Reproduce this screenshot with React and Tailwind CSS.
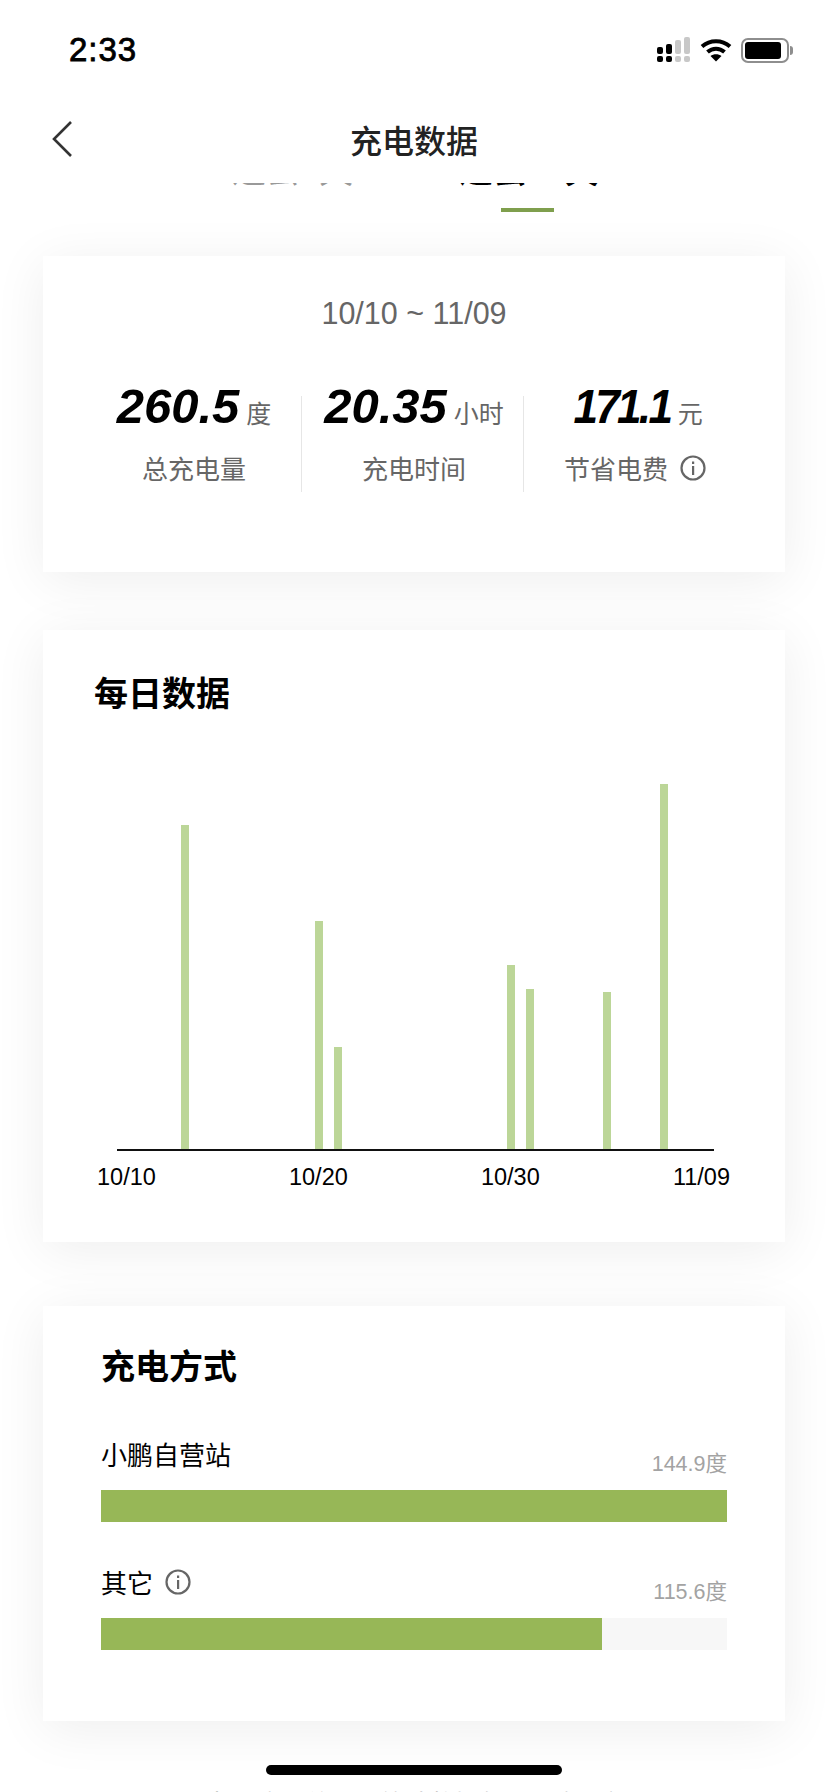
import React from "react";

const sans = "font-['Liberation_Sans','Noto_Sans_CJK_SC',sans-serif]";
const cardShadow = "shadow-[0_8px_50px_rgba(0,0,0,0.07)]";

const bars = [
    { x: 64, h: 324 },
    { x: 198, h: 228 },
    { x: 217, h: 102 },
    { x: 390, h: 184 },
    { x: 409, h: 160 },
    { x: 486, h: 157 },
    { x: 543, h: 365 },
];

const InfoIcon = ({ size = 26 }) => (
    <svg width={size} height={size} viewBox="0 0 26 26" fill="none" className="shrink-0 -translate-y-[2px]">
        <circle cx="13" cy="13" r="11.5" stroke="#666" strokeWidth="2.2" />
        <rect x="12" y="11" width="2.2" height="9" fill="#666" />
        <rect x="12" y="6.5" width="2.2" height="2.5" fill="#666" />
    </svg>
);

const StatusIcons = () => (
    <div className="flex items-center gap-[8px]">
        <svg width="36" height="26" viewBox="0 0 36 26">
            <rect x="1" y="10" width="6" height="7" rx="2" fill="#000" />
            <rect x="1" y="19" width="6" height="6" rx="2" fill="#000" />
            <rect x="10" y="7" width="6" height="10" rx="2" fill="#000" />
            <rect x="10" y="19" width="6" height="6" rx="2" fill="#000" />
            <rect x="19" y="3" width="6" height="14" rx="2" fill="#c8c8c8" />
            <rect x="19" y="19" width="6" height="6" rx="2" fill="#c8c8c8" />
            <rect x="28" y="0" width="6" height="17" rx="2" fill="#c8c8c8" />
            <rect x="28" y="19" width="6" height="6" rx="2" fill="#c8c8c8" />
        </svg>
        <svg width="32" height="24" viewBox="0 0 32 24" fill="none">
            <path d="M2 8.5C10 1.5 22 1.5 30 8.5" stroke="#000" strokeWidth="4" />
            <path d="M7.5 14C12.5 9.5 19.5 9.5 24.5 14" stroke="#000" strokeWidth="4" />
            <path d="M16 23.5L10.5 18C13.5 15.5 18.5 15.5 21.5 18Z" fill="#000" />
        </svg>
        <div className="flex items-center ml-[1px]">
            <div className="w-[48px] h-[25px] rounded-[7px] border-2 border-[#8e8e8e] p-[2px]">
                <div className="w-[36px] h-full rounded-[3px] bg-black" />
            </div>
            <div className="w-[3px] h-[9px] ml-[1px] rounded-r-full bg-[#8e8e8e]" />
        </div>
    </div>
);

const Stat = ({ value, unit, label, info, last, className, valueClass }) => (
    <div className={`flex flex-col items-center h-[96px] ${className} ${last ? "" : "border-r border-[#e6e6e6]"}`}>
        <div className="flex items-baseline gap-[7px] h-[50px] -mt-[15px]">
            <span className={`text-[49px] leading-[50px] font-bold italic text-black ${valueClass || ""}`}>{value}</span>
            <span className="text-[25px] leading-[30px] text-[#666]">{unit}</span>
        </div>
        <div className="flex items-center gap-[12px] mt-[21px] h-[36px] text-[26px] text-[#666]">
            <span>{label}</span>
            {info && <InfoIcon />}
        </div>
    </div>
);

const ChargeRow = ({ name, amount, percent, info }) => (
    <div>
        <div className="flex justify-between items-end h-[40px]">
            <div className="flex items-center gap-[12px] text-[26px] leading-[40px] text-black -mb-[2px] -translate-y-[4px]">
                <span>{name}</span>
                {info && <InfoIcon />}
            </div>
            <span className="text-[21.5px] leading-[28px] text-[#a3a3a3]">{amount}</span>
        </div>
        <div className="h-[32px] mt-[12px] bg-[#f7f7f7]">
            <div className="h-full bg-[#97b757]" style={{ width: `${percent}%` }} />
        </div>
    </div>
);

export default function App() {
    return (
        <div className={`relative w-[828px] h-[1792px] overflow-hidden bg-white ${sans}`}>
            {/* Header */}
            <div className="h-[183px] bg-white">
                <div className="flex justify-between items-center h-[100px] pl-[69px] pr-[35px]">
                    <span className="text-[33px] font-medium tracking-[1px] text-black [-webkit-text-stroke:0.8px_black]">2:33</span>
                    <StatusIcons />
                </div>
                <div className="relative flex items-center justify-center h-[83px]">
                    <svg width="24" height="38" viewBox="0 0 24 38" fill="none" className="absolute left-[50px] top-[20px]">
                        <path d="M21 2L4 19L21 36" stroke="#333" strokeWidth="2.6" />
                    </svg>
                    <span className="text-[32px] leading-[48px] font-medium text-[#222]">充电数据</span>
                </div>
            </div>

            {/* Tabs, mostly scrolled under the header */}
            <div className="relative h-[73px]">
                <div className="flex h-[7px] overflow-hidden">
                    <div className="flex items-end h-full text-[34px] leading-[7px]">
                        <span className="ml-[232px] w-[122px] whitespace-nowrap text-[#999] -translate-y-[15px]">过去7天</span>
                        <span className="ml-[105px] whitespace-nowrap font-bold text-black -translate-y-[15px]">过去30天</span>
                    </div>
                </div>
                <div className="ml-[501px] mt-[18px] w-[53px] h-[4px] bg-[#7f9f4d]" />
            </div>

            <div className="flex flex-col px-[43px]">
                {/* Summary */}
                <div className={`h-[316px] bg-white ${cardShadow}`}>
                    <div className="pt-[37px] text-center text-[30.5px] leading-[40px] text-[#666]">
                        10/10 ~ 11/09
                    </div>
                    <div className="flex mt-[63px] px-[42px]">
                        <Stat className="w-[217px] pl-[2px]" value="260.5" unit="度" label="总充电量" />
                        <Stat className="w-[222px] pl-[3px]" value="20.35" unit="小时" label="充电时间" />
                        <Stat className="flex-1 pl-[3px]" valueClass="tracking-[-3px] scale-x-[0.9] ml-[1px] -mr-[5px]" value="171.1" unit="元" label="节省电费" info last />
                    </div>
                </div>

                {/* Daily */}
                <div className={`h-[612px] mt-[58px] bg-white ${cardShadow}`}>
                    <h2 className="pl-[51px] pt-[39px] text-[34px] leading-[50px] font-bold text-black">每日数据</h2>
                    <svg width="597" height="368" viewBox="0 0 597 368" className="ml-[74px] mt-[65px]">
                        {bars.map((bar) => (
                            <rect key={bar.x} x={bar.x} y={365 - bar.h} width="8" height={bar.h} fill="#bcd698" />
                        ))}
                        <rect x="0" y="365" width="597" height="2" fill="#111" />
                    </svg>
                    <div className="flex justify-between pl-[54px] pr-[55px] mt-[10px] text-[23.5px] leading-[30px] text-black">
                        <span>10/10</span>
                        <span>10/20</span>
                        <span>10/30</span>
                        <span>11/09</span>
                    </div>
                </div>

                {/* Charge type */}
                <div className={`h-[415px] mt-[64px] px-[58px] bg-white ${cardShadow}`}>
                    <h2 className="pt-[36px] text-[34px] leading-[50px] font-bold text-black">充电方式</h2>
                    <div className="flex flex-col gap-[44px] mt-[46px]">
                        <ChargeRow name="小鹏自营站" amount="144.9度" percent={100} />
                        <ChargeRow name="其它" amount="115.6度" percent={80} info />
                    </div>
                </div>

                <p className="mt-[67px] ml-[6px] text-center whitespace-nowrap text-[25px] leading-[32px] text-[#999]">
                    本页流量总量，统计数据每日一次更新
                </p>
            </div>

            {/* Home indicator */}
            <div className="absolute left-[266px] top-[1765px] w-[296px] h-[10px] rounded-full bg-black" />
        </div>
    );
}
